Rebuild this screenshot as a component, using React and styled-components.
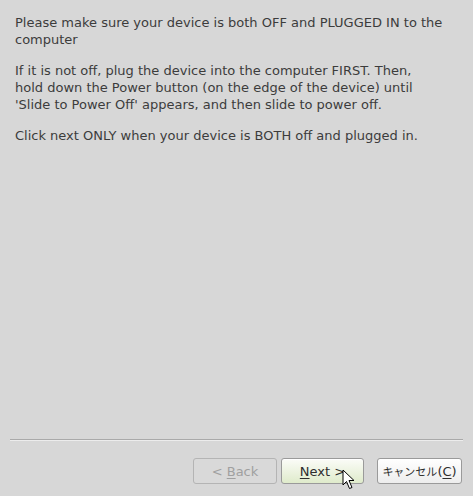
import React from 'react';
import styled, { createGlobalStyle } from 'styled-components';

const GlobalStyle = createGlobalStyle`
  html, body {
    margin: 0;
    padding: 0;
    background: #d7d7d7;
  }
  #root {
    height: 100vh;
  }
`;

const Window = styled.div`
  display: flex;
  flex-direction: column;
  height: 496px;
  width: 473px;
  box-sizing: border-box;
  background: #d7d7d7;
  font-family: "DejaVu Sans", "Noto Sans CJK JP", sans-serif;
  font-size: 13px;
  color: #3c3c3c;
`;

const Content = styled.div`
  flex: 1;
  padding: 14px 0 0 15px;
  width: 428px;
`;

const Para = styled.p`
  margin: 0 0 14px 0;
  line-height: 17px;
`;

const Separator = styled.div`
  margin: 0 10px;
  height: 1px;
  background: #a9a9a9;
  border-bottom: 1px solid #ececec;
`;

const ButtonRow = styled.div`
  display: flex;
  justify-content: flex-end;
  align-items: center;
  padding: 17px 11px 12px 0;
`;

const NavGroup = styled.div`
  display: flex;
  gap: 4px;
  margin-right: 13px;
`;

const Button = styled.button`
  position: relative;
  box-sizing: border-box;
  height: 26px;
  width: ${(p) => p.$w}px;
  padding: 0;
  white-space: nowrap;
  border: 1px solid ${(p) => (p.$disabled ? '#b4b4b4' : '#9a9a9a')};
  border-radius: 3px;
  font-family: "DejaVu Sans", "Noto Sans CJK JP", sans-serif;
  font-size: 13px;
  color: ${(p) => (p.$disabled ? '#a0a0a0' : '#2e2e2e')};
  background: ${(p) =>
    p.$default
      ? 'linear-gradient(#fbfcf8, #dfebcb)'
      : p.$disabled
      ? '#d9d9d9'
      : 'linear-gradient(#ffffff, #ededed)'};
  box-shadow: ${(p) => (p.$disabled ? 'none' : 'inset 0 1px 0 #ffffff')};
  cursor: default;
`;

const Kana = styled.span`
  font-family: "Noto Sans CJK JP", sans-serif;
  font-size: 11px;
`;

const Mnemonic = styled.span`
  text-decoration: underline;
  text-underline-offset: 2px;
`;

const Cursor = styled.svg`
  position: absolute;
  left: 60px;
  top: 10px;
  pointer-events: none;
`;

export default function App() {
  return (
    <>
      <GlobalStyle />
      <Window>
        <Content>
          <Para>
            Please make sure your device is both OFF and PLUGGED IN to the computer
          </Para>
          <Para>
            If it is not off, plug the device into the computer FIRST. Then, hold
            down the Power button (on the edge of the device) until 'Slide to
            Power Off' appears, and then slide to power off.
          </Para>
          <Para>Click next ONLY when your device is BOTH off and plugged in.</Para>
        </Content>
        <Separator />
        <ButtonRow>
          <NavGroup>
            <Button $w={84} $disabled disabled>
              &lt; <Mnemonic>B</Mnemonic>ack
            </Button>
            <Button $w={83} $default>
              <Mnemonic>N</Mnemonic>ext &gt;
              <Cursor width="14" height="22" viewBox="0 0 14 22">
                <path
                  d="M1 1 L1 16 L4.5 12.5 L7.5 19.5 L10 18.5 L7 11.5 L12 11.5 Z"
                  fill="#ffffff"
                  stroke="#000000"
                  strokeWidth="1"
                  strokeLinejoin="miter"
                />
              </Cursor>
            </Button>
          </NavGroup>
          <Button $w={85}>
            <Kana>キャンセル</Kana>(<Mnemonic>C</Mnemonic>)
          </Button>
        </ButtonRow>
      </Window>
    </>
  );
}
